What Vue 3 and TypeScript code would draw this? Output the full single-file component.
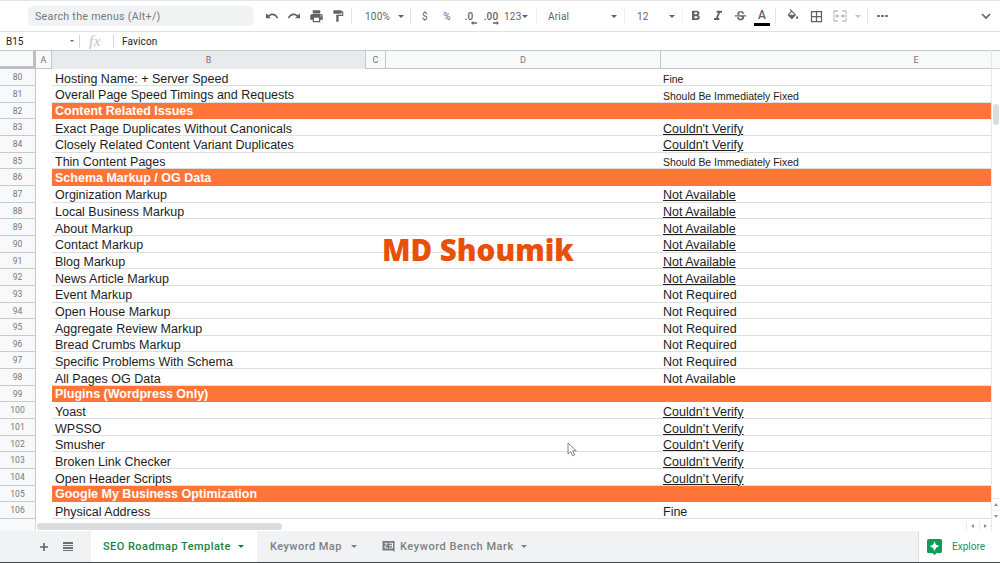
<script setup lang="ts">
interface Row {
  n: number
  label: string
  value?: string
  kind?: 'section' | 'small' | 'link'
}

const rows: Row[] = [
  { n: 80, label: 'Hosting Name: + Server Speed', value: 'Fine', kind: 'small' },
  { n: 81, label: 'Overall Page Speed Timings and Requests', value: 'Should Be Immediately Fixed', kind: 'small' },
  { n: 82, label: 'Content Related Issues', kind: 'section' },
  { n: 83, label: 'Exact Page Duplicates Without Canonicals', value: "Couldn't Verify", kind: 'link' },
  { n: 84, label: 'Closely Related Content Variant Duplicates', value: "Couldn't Verify", kind: 'link' },
  { n: 85, label: 'Thin Content Pages', value: 'Should Be Immediately Fixed', kind: 'small' },
  { n: 86, label: 'Schema Markup / OG Data', kind: 'section' },
  { n: 87, label: 'Orginization Markup', value: 'Not Available', kind: 'link' },
  { n: 88, label: 'Local Business Markup', value: 'Not Available', kind: 'link' },
  { n: 89, label: 'About Markup', value: 'Not Available', kind: 'link' },
  { n: 90, label: 'Contact Markup', value: 'Not Available', kind: 'link' },
  { n: 91, label: 'Blog Markup', value: 'Not Available', kind: 'link' },
  { n: 92, label: 'News Article Markup', value: 'Not Available', kind: 'link' },
  { n: 93, label: 'Event Markup', value: 'Not Required' },
  { n: 94, label: 'Open House Markup', value: 'Not Required' },
  { n: 95, label: 'Aggregate Review Markup', value: 'Not Required' },
  { n: 96, label: 'Bread Crumbs Markup', value: 'Not Required' },
  { n: 97, label: 'Specific Problems With Schema', value: 'Not Required' },
  { n: 98, label: 'All Pages OG Data', value: 'Not Available' },
  { n: 99, label: 'Plugins (Wordpress Only)', kind: 'section' },
  { n: 100, label: 'Yoast', value: 'Couldn’t Verify', kind: 'link' },
  { n: 101, label: 'WPSSO', value: 'Couldn’t Verify', kind: 'link' },
  { n: 102, label: 'Smusher', value: 'Couldn’t Verify', kind: 'link' },
  { n: 103, label: 'Broken Link Checker', value: 'Couldn’t Verify', kind: 'link' },
  { n: 104, label: 'Open Header Scripts', value: 'Couldn’t Verify', kind: 'link' },
  { n: 105, label: 'Google My Business Optimization', kind: 'section' },
  { n: 106, label: 'Physical Address', value: 'Fine' },
]
</script>

<template>
  <div class="app">
    <header class="toolbar">
      <div class="search">Search the menus (Alt+/)</div>
      <span class="tool"><svg width="14" height="14" viewBox="0 0 14 14"><path d="M1 4.2v5h5L4.2 7.4C6.6 5.6 10 6 11.8 9.4l1.4-.6C11.200 4.200 6.600 3.200 3.100 6.300z" /></svg></span>
      <span class="tool"><svg width="14" height="14" viewBox="0 0 14 14"><path d="M13 4.2v5H8l1.800-1.800C7.400 5.600 4 6 2.200 9.400L.8 8.800C2.800 4.200 7.400 3.200 10.900 6.300z" /></svg></span>
      <span class="tool"><svg width="15" height="15" viewBox="0 0 24 24"><path d="M19 8H5c-1.660 0-3 1.340-3 3v6h4v4h12v-4h4v-6c0-1.660-1.340-3-3-3zm-3 11H8v-5h8v5zm3-7a1 1 0 1 1 0-2 1 1 0 0 1 0 2zM18 2H6v5h12z" /></svg></span>
      <span class="tool"><svg width="14" height="14" viewBox="0 0 24 24"><path d="M18 4V3a1 1 0 0 0-1-1H5a1 1 0 0 0-1 1v4a1 1 0 0 0 1 1h12a1 1 0 0 0 1-1V6h1v4H9v11a1 1 0 0 0 1 1h2a1 1 0 0 0 1-1v-9h8V4z" /></svg></span>
      <i class="sep"></i>
      <span class="zoom">100%</span><i class="caret zoom-caret"></i>
      <i class="sep"></i>
      <span class="tool money">$</span>
      <span class="tool">%</span>
      <span class="tool decimal">.0<svg width="6" height="4" viewBox="0 0 6 4"><path d="M0 2l2.300-2v1.300H6v1.400H2.300V4z" /></svg></span>
      <span class="tool decimal">.00<svg width="6" height="4" viewBox="0 0 6 4"><path d="M6 2L3.700 0v1.300H0v1.400h3.700V4z" /></svg></span>
      <span class="formats">123<i class="caret"></i></span>
      <i class="sep faint"></i>
      <span class="font">Arial</span><i class="caret font-caret"></i>
      <i class="sep faint"></i>
      <span class="size">12</span><i class="caret size-caret"></i>
      <i class="sep faint"></i>
      <span class="tool bold"><svg width="16" height="16" viewBox="0 0 24 24"><path d="M15.600 10.790c.97-.67 1.650-1.770 1.650-2.790 0-2.260-1.750-4-4-4H6v14h8.040c2.090 0 3.710-1.700 3.710-3.790 0-1.520-.86-2.820-2.150-3.420zM9.500 6.500h3a1.500 1.500 0 0 1 0 3h-3v-3zm3.500 9H9.500v-3H13a1.500 1.500 0 0 1 0 3z" /></svg></span>
      <span class="tool"><svg width="16" height="16" viewBox="0 0 24 24"><path d="M10 4v3h2.210l-3.420 8H6v3h8v-3h-2.210l3.420-8H18V4z" /></svg></span>
      <span class="tool"><svg width="15" height="15" viewBox="0 0 24 24"><path d="M6.850 7.080C6.850 4.370 9.450 3 12.240 3c1.640 0 3 .49 3.900 1.280.77.65 1.460 1.730 1.460 3.240h-3.010c0-.31-.05-.59-.15-.85-.29-.86-1.200-1.280-2.250-1.280-1.860 0-2.340 1.020-2.340 1.700 0 .48.250.88.740 1.210.38.250.77.480 1.410.7H7.390c-.21-.34-.54-.89-.54-1.920zM21 12v-2H3v2h9.620c1.150.45 1.960.75 1.960 1.970 0 1-.81 1.670-2.280 1.670-1.540 0-2.930-.54-2.930-2.510H6.400c0 .55.080 1.130.24 1.580.81 2.290 3.290 3.300 5.670 3.300 2.270 0 5.300-.89 5.300-4.050 0-.3-.01-1.160-.48-1.940H21V12z" /></svg></span>
      <span class="tool"><span class="ink">A</span></span>
      <i class="sep"></i>
      <span class="tool fill"><svg width="14" height="14" viewBox="0 0 24 24"><path d="M16.560 8.940L7.620 0 6.210 1.410l2.380 2.380-5.150 5.150a1.490 1.490 0 0 0 0 2.120l5.500 5.500c.58.58 1.530.58 2.120 0l5.500-5.500c.58-.59.58-1.530 0-2.120zM5.210 10L10 5.210 14.790 10zM19 11.500s-2 2.170-2 3.500a2 2 0 0 0 4 0c0-1.330-2-3.500-2-3.500z" /></svg></span>
      <span class="tool"><svg width="15" height="15" viewBox="0 0 24 24"><path d="M3 3v18h18V3H3zm8 16H5v-6h6v6zm0-8H5V5h6v6zm8 8h-6v-6h6v6zm0-8h-6V5h6v6z" /></svg></span>
      <span class="tool merge"><svg width="14" height="12" viewBox="0 0 14 12"><path d="M1 4V1h4M9 1h4v3M13 8v3H9M5 11H1V8M0 6h5M14 6H9M3.500 4.300L5.300 6 3.500 7.700M10.500 4.300L8.700 6l1.800 1.700" /></svg></span>
      <i class="caret merge-caret"></i>
      <i class="sep"></i>
      <span class="more"><i></i><i></i><i></i></span>
      <svg class="collapse" width="10" height="7" viewBox="0 0 10 7"><path d="M1 1l4 4 4-4" /></svg>
    </header>

    <div class="formula">
      <span class="cellname">B15</span><i class="caret small"></i>
      <i class="sep"></i><span class="fx">fx</span><i class="sep"></i>
      <span class="content">Favicon</span>
    </div>

    <main class="sheet">
      <div class="table">
        <div class="row heads">
          <div class="corner"></div>
          <div>A</div><div class="selected">B</div><div>C</div><div>D</div><div>E</div>
        </div>
        <div v-for="row in rows" :key="row.n" class="row line" :class="row.kind">
          <div class="num">{{ row.n }}</div>
          <div class="gap"></div>
          <div class="label">{{ row.label }}</div>
          <div class="value"><span>{{ row.value }}</span></div>
        </div>
        <div class="hscroll">
          <div class="numfoot"></div>
          <div class="hthumb"></div>
          <div class="harrows"><i></i><i></i></div>
        </div>
      </div>
      <div class="vscroll">
        <div class="vhead"></div>
        <div class="vthumb"></div>
        <div class="varrows"><i></i><i></i></div>
      </div>
      <div class="watermark">MD Shoumik</div>
      <svg class="pointer" width="11" height="15" viewBox="0 0 11 15"><path d="M1 1v11l2.700-2.400 1.800 4.200 2-.8-1.800-4.200h3.600z" /></svg>
    </main>

    <footer class="tabs">
      <svg class="plus" width="10" height="10" viewBox="0 0 10 10"><path d="M4.200 1h1.600v3.200H9v1.600H5.800V9H4.200V5.800H1V4.200h3.200z" /></svg>
      <span class="list"><i></i><i></i><i></i><i></i></span>
      <div class="tab active"><span>SEO Roadmap Template</span><i class="caret"></i></div>
      <div class="tab map"><span>Keyword Map</span><i class="caret"></i></div>
      <div class="tab bench">
        <svg width="13" height="13" viewBox="0 0 13 13"><path class="bubble" d="M.5 1h12v11l-2-1.500H.5z" /><path class="glyph" d="M2.500 3.300h3L3 6v2h3M7 3.200h3.500M7 5.500h3M7 8h3.500v-5" /></svg>
        <span>Keyword Bench Mark</span><i class="caret"></i>
      </div>
      <div class="explore">
        <svg width="15" height="16" viewBox="0 0 15 16"><path d="M1.500 0h12A1.500 1.500 0 0 1 15 1.500v11a1.500 1.500 0 0 1-1.500 1.500H9.800L7.500 16l-2.300-2H1.500A1.500 1.500 0 0 1 0 12.500v-11A1.500 1.500 0 0 1 1.500 0z" fill="#109d58" /><path d="M7.500 2.500L9 5.700 12.200 7.200 9 8.700l-1.500 3.200L6 8.700 2.800 7.200 6 5.700z" fill="#fff" /></svg>
        <span>Explore</span>
      </div>
    </footer>
  </div>
</template>

<style>
body {
  overflow: hidden;
}
</style>

<style scoped>
* {
  box-sizing: border-box;
}
.app {
  width: 1000px;
  height: 563px;
  display: flex;
  flex-direction: column;
  background: #fff;
  font-family: Roboto, "Liberation Sans", sans-serif;
  color: #202124;
}
svg {
  display: block;
  flex: none;
}
.toolbar {
  height: 32px;
  flex: none;
  display: flex;
  align-items: center;
  border-top: 1px solid #e3e4e6;
  border-bottom: 1px solid #e0e1e3;
  font-size: 10px;
  color: #5f6368;
  fill: #5f6368;
  letter-spacing: 0.2px;
}
.search {
  width: 226px;
  height: 20px;
  margin: 0 7px 0 28px;
  padding-left: 7px;
  line-height: 21px;
  border-radius: 6px;
  background: #f1f2f4;
  color: #75797e;
  font-size: 10.700px;
  letter-spacing: 0.270px;
}
.tool {
  width: 22px;
  height: 22px;
  flex: none;
  display: flex;
  align-items: center;
  justify-content: center;
}
.sep {
  width: 1px;
  height: 16px;
  flex: none;
  background: #e3e4e7;
}
.toolbar .sep {
  margin-left: 2px;
}
.toolbar .sep.faint {
  background: #eeeff0;
}
.caret {
  width: 0;
  height: 0;
  flex: none;
  border: 3px solid transparent;
  border-top: 3.500px solid currentColor;
  border-bottom: 0;
}
.zoom {
  width: 33px;
  margin-left: 13px;
}
.zoom-caret {
  margin-right: 4px;
}
.money {
  margin-left: 3px;
}
.decimal {
  position: relative;
  font-weight: 500;
}
.decimal svg {
  position: absolute;
  right: 3px;
  bottom: 2px;
}
.formats {
  width: 30px;
  margin-left: 2px;
  display: flex;
  align-items: center;
  gap: 1px;
}
.font {
  width: 63px;
  margin-left: 11px;
}
.font-caret {
  margin-right: 5px;
}
.size {
  width: 32px;
  margin-left: 12px;
}
.size-caret {
  margin-right: 5px;
}
.bold {
  margin-left: 2px;
}
.ink {
  width: 16px;
  height: 17px;
  border-bottom: 3px solid #000;
  text-align: center;
  font-size: 12px;
  font-weight: 500;
  line-height: 12px;
  margin-top: 3px;
}
.fill {
  margin-left: 6px;
  margin-right: 1px;
}
.merge {
  margin-left: 2px;
}
.merge svg {
  fill: none;
  stroke: #c2c4c7;
  stroke-width: 1.500;
}
.merge-caret {
  margin: 0 4px 0 4px;
  color: #c2c4c7;
}
.more {
  display: flex;
  gap: 1.500px;
  margin-left: 9px;
}
.more i {
  width: 2.700px;
  height: 2.700px;
  border-radius: 50%;
  background: #5f6368;
}
.collapse {
  margin-left: auto;
  margin-right: 9px;
  fill: none;
  stroke: #5f6368;
  stroke-width: 1.700;
}
.formula {
  height: 18px;
  flex: none;
  display: flex;
  align-items: center;
  font-size: 10px;
}
.cellname {
  width: 63px;
  padding-left: 6px;
}
.formula .caret {
  border-width: 2.500px;
  border-bottom: 0;
  margin: 0 5px 0 7px;
  color: #5f6368;
}
.formula .sep {
  height: 13px;
  background: #d5d7da;
}
.fx {
  width: 33px;
  padding-left: 9px;
  font: italic 15px/16px "Liberation Serif", serif;
  letter-spacing: 0.500px;
  color: #bdbfc2;
}
.content {
  margin-left: 8px;
  letter-spacing: 0.150px;
}
.sheet {
  position: relative;
  height: 481px;
  flex: none;
  display: flex;
}
.table {
  width: 991px;
  flex: none;
}
.row {
  display: grid;
}
.heads {
  grid-template-columns: 36px 16px 314px 20px 275px 330px;
  height: 19.330px;
  border-top: 1px solid #c6c7c9;
  border-bottom: 1px solid #c3c4c6;
  background: #f8f9fa;
  font-size: 9px;
  color: #70747a;
  line-height: 18px;
  text-align: center;
}
.heads > div {
  border-right: 1px solid #c6c7ca;
}
.heads > div:last-child {
  border-right: 0;
  padding-left: 180px;
}
.heads > .corner {
  border-right: 3px solid #bdbec1;
  border-bottom: 3px solid #bdbec1;
}
.heads > .selected {
  background: #e8eaed;
}
.line {
  grid-template-columns: 36px 16px 608px 331px;
  grid-template-rows: 16.667px;
  height: 16.667px;
  font: 12.500px/16.667px "Liberation Sans", Arial, sans-serif;
  color: #1d1d1d;
  white-space: nowrap;
}
.num {
  border-right: 1px solid #c6c7ca;
  border-bottom: 1px solid #c9cacc;
  background: #f8f9fa;
  font: 8.500px/15px Roboto, sans-serif;
  padding-top: 1px;
  color: #74787d;
  text-align: center;
}
.label,
.value {
  padding: 1.500px 0 0 3px;
  border-bottom: 1px solid #dedfe0;
}
.small .value {
  font-size: 10.450px;
  padding-top: 2.800px;
}
.link .value span {
  text-decoration: underline;
}
.section .label,
.section .value {
  background: #ff7537;
  border-color: #ff7537;
  color: #fff;
  font-weight: bold;
  padding-top: 0.400px;
}
.hscroll {
  height: 11.670px;
  display: flex;
  align-items: center;
}
.numfoot {
  width: 36px;
  height: 100%;
  background: #f8f9fa;
  border-right: 1px solid #d5d6d8;
}
.hthumb {
  width: 245px;
  height: 7px;
  margin: 3px 0 0 1px;
  border-radius: 3px;
  background: #dadce0;
}
.harrows {
  display: flex;
  margin: 3px 0 0 auto;
}
.harrows i {
  width: 12.500px;
  height: 9px;
  border-left: 1px solid #ececee;
  display: flex;
  align-items: center;
  justify-content: center;
}
.harrows i::before {
  content: "";
  border: 2px solid transparent;
  border-right: 3px solid #8f9296;
  border-left: 0;
}
.harrows i:last-child::before {
  border-left: 3px solid #8f9296;
  border-right: 0;
}
.vscroll {
  width: 9px;
  display: flex;
  flex-direction: column;
  align-items: center;
  border-left: 1px solid #e8e8ea;
}
.vhead {
  width: 100%;
  height: 19px;
  background: #f8f9fa;
  border-top: 1px solid #c6c7c9;
  border-bottom: 1px solid #d5d6d8;
}
.vthumb {
  width: 6px;
  height: 21px;
  margin-top: 35px;
  border-radius: 3px;
  background: #dadce0;
}
.varrows {
  width: 100%;
  margin-top: auto;
  margin-bottom: 9px;
}
.varrows i {
  height: 12px;
  border-top: 1px solid #ececee;
  display: flex;
  align-items: center;
  justify-content: center;
}
.varrows i::before {
  content: "";
  border: 2px solid transparent;
  border-bottom: 3px solid #8f9296;
  border-top: 0;
}
.varrows i:last-child::before {
  border-top: 3px solid #8f9296;
  border-bottom: 0;
}
.watermark {
  position: absolute;
  left: 382px;
  top: 180px;
  font: 800 29.500px/40px "Open Sans", "Noto Sans", sans-serif;
  color: #e8500a;
  white-space: nowrap;
}
.pointer {
  position: absolute;
  left: 567px;
  top: 392px;
  fill: #fff;
  stroke: #777;
  stroke-width: 0.900;
}
.tabs {
  height: 32px;
  flex: none;
  display: flex;
  align-items: center;
  background: #f1f2f4;
  border-bottom: 1px solid #45464a;
  color: #7b7f84;
  font: 500 11px/31px Roboto, sans-serif;
  letter-spacing: 0.450px;
  white-space: nowrap;
}
.plus {
  margin-left: 39px;
  fill: #5f6368;
}
.list {
  display: flex;
  flex-direction: column;
  gap: 1px;
  margin-left: 14px;
}
.list i {
  width: 10px;
  height: 1.500px;
  background: #6c7074;
}
.tab {
  display: flex;
  align-items: center;
  height: 31px;
}
.tab > span {
  flex: none;
}
.tab .caret {
  margin-left: auto;
}
.active {
  width: 166px;
  margin-left: 18px;
  padding: 0 13px 0 12px;
  background: #fff;
  color: #1d7f45;
}
.map {
  width: 112px;
  padding: 0 12px 0 13px;
}
.bench {
  width: 160px;
  padding: 0 2px 0 13px;
  gap: 5px;
}
.bench > span {
  letter-spacing: 0.550px;
}
.bubble {
  fill: #777b80;
}
.glyph {
  fill: none;
  stroke: #f1f2f4;
}
.explore {
  width: 82px;
  height: 31px;
  margin-left: auto;
  padding-left: 8px;
  display: flex;
  align-items: center;
  gap: 10px;
  background: #fff;
  border-left: 1px solid #dddee0;
  color: #22935a;
  font-size: 10px;
  font-weight: 400;
  letter-spacing: 0;
}
</style>
